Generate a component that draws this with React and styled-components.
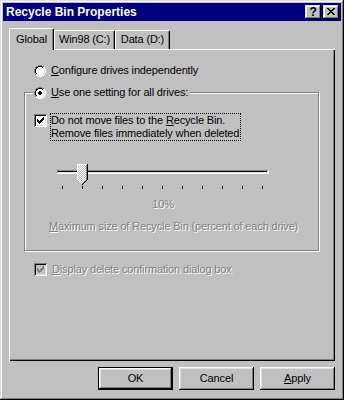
import React from "react";
import styled, { createGlobalStyle } from "styled-components";

const GlobalStyle = createGlobalStyle`
  html, body { margin: 0; padding: 0; background: #c0c0c0; }
  body { font-family: "Liberation Sans", Arial, sans-serif; font-size: 11px; }
  *, *::before, *::after { box-sizing: border-box; }
`;

const Window = styled.div`
  width: 344px;
  height: 400px;
  padding: 3px;
  background: #c0c0c0;
  box-shadow: inset -1px -1px #000, inset 1px 1px #dfdfdf, inset -2px -2px #808080, inset 2px 2px #fff;
  display: flex;
  flex-direction: column;
  font-family: "Liberation Sans", Arial, sans-serif;
  font-size: 11px;
  letter-spacing: -0.15px;
  color: #000;
`;

const TitleBar = styled.div`
  height: 18px;
  flex: none;
  background: #000080;
  display: flex;
  align-items: center;
  justify-content: space-between;
  padding: 0 2px 0 3px;
`;

const Title = styled.span`
  color: #fff;
  font-weight: bold;
  font-size: 12px;
  letter-spacing: 0;
  line-height: 18px;
`;

const CaptionButtons = styled.div`
  display: flex;
  gap: 2px;
`;

const CaptionButton = styled.div`
  width: 16px;
  height: 14px;
  background: #c0c0c0;
  display: flex;
  align-items: center;
  justify-content: center;
  box-shadow: inset -1px -1px #000, inset 1px 1px #dfdfdf, inset -2px -2px #808080, inset 2px 2px #fff;
  font-weight: bold;
  font-size: 12px;
  line-height: 12px;
  padding-bottom: 1px;
`;

const Body = styled.div`
  flex: 1;
  display: flex;
  flex-direction: column;
  padding: 7px 6px 7px 6px;
`;

const TabStrip = styled.div`
  display: flex;
  align-items: flex-end;
  height: 21px;
  flex: none;
`;

const Tab = styled.div`
  width: ${(p) => p.$w}px;
  height: ${(p) => (p.$active ? 22 : 19)}px;
  margin-bottom: ${(p) => (p.$active ? -1 : 0)}px;
  position: relative;
  z-index: ${(p) => (p.$active ? 1 : 0)};
  background: #c0c0c0;
  border-top: 1px solid #fff;
  border-left: 1px solid #fff;
  border-right: 1px solid #000;
  border-radius: 2px 2px 0 0;
  box-shadow: inset -1px 0 #808080;
  padding-top: ${(p) => (p.$active ? 4 : 2)}px;
  text-align: center;
  line-height: 13px;
  white-space: nowrap;
`;

const Panel = styled.div`
  height: 312px;
  flex: none;
  background: #c0c0c0;
  box-shadow: inset 1px 1px #fff, inset -1px -1px #000, inset -2px -2px #808080;
  padding: 15px 15px 0 15px;
  display: flex;
  flex-direction: column;
  align-items: flex-start;
`;

const OptionRow = styled.div`
  display: flex;
  align-items: ${(p) => (p.$top ? "flex-start" : "center")};
  gap: ${(p) => p.$gap ?? 5}px;
  margin-left: ${(p) => p.$indent ?? 10}px;
  margin-top: ${(p) => p.$mt ?? 0}px;
  line-height: 13px;
  white-space: nowrap;
`;

const Group = styled.div`
  width: 295px;
  margin-top: 15px;
  border: 1px solid #808080;
  box-shadow: inset 1px 1px #fff, 1px 1px #fff;
  padding-bottom: 17px;
  display: flex;
  flex-direction: column;
  align-items: flex-start;
`;

const Legend = styled.div`
  margin: -7px 0 0 8px;
  padding: 0 2px 0 1px;
  background: #c0c0c0;
  display: flex;
  align-items: center;
  gap: 5px;
  height: 13px;
  line-height: 13px;
  white-space: nowrap;
`;

const Box = styled.span`
  width: 13px;
  height: 13px;
  flex: none;
  display: flex;
  padding: 3px;
  margin-top: ${(p) => p.$mt ?? 0}px;
  background: ${(p) => (p.$disabled ? "#c0c0c0" : "#fff")};
  box-shadow: inset 1px 1px #808080, inset -1px -1px #fff, inset 2px 2px #000, inset -2px -2px #dfdfdf;
`;

const FocusLabel = styled.span`
  border: 1px dotted #000;
  line-height: 13px;
  padding-right: 1px;
  white-space: nowrap;
`;

const Dim = styled.span`
  color: #808080;
  text-shadow: 1px 1px 0 #fff;
`;

const SliderArt = styled.svg`
  display: block;
  margin: 21px 0 0 31px;
`;

const ValueLabel = styled.div`
  width: 214px;
  margin: 9px 0 0 31px;
  text-align: center;
  line-height: 13px;
`;

const Caption = styled.div`
  margin: 9px 0 0 24px;
  line-height: 13px;
  white-space: nowrap;
`;

const ButtonRow = styled.div`
  display: flex;
  justify-content: flex-end;
  gap: 6px;
  margin-top: 6px;
`;

const PushButton = styled.div`
  width: 75px;
  height: 23px;
  display: flex;
  align-items: center;
  justify-content: center;
  background: #c0c0c0;
  line-height: 13px;
  box-shadow: ${(p) =>
    p.$default
      ? "inset 0 0 0 1px #000, inset -2px -2px #000, inset 2px 2px #fff, inset -3px -3px #808080, inset 3px 3px #dfdfdf"
      : "inset -1px -1px #000, inset 1px 1px #fff, inset -2px -2px #808080, inset 2px 2px #dfdfdf"};
`;

const Bitmap = ({ rows, palette }) => {
  const h = rows.length;
  const w = rows[0].length;
  const rects = [];
  rows.forEach((r, y) => {
    [...r].forEach((c, x) => {
      const fill = palette[c];
      if (fill) rects.push(<rect key={`${x}-${y}`} x={x} y={y} width={1} height={1} fill={fill} />);
    });
  });
  return (
    <svg width={w} height={h} viewBox={`0 0 ${w} ${h}`} shapeRendering="crispEdges" style={{ display: "block", flex: "none" }}>
      {rects}
    </svg>
  );
};

const RADIO = [
  "....gggg....",
  "..ggkkkkgg..",
  ".gkkwwwwklw.",
  ".gkwwwwwwlw.",
  "gkwwwwwwwwlw",
  "gkwwwwwwwwlw",
  "gkwwwwwwwwlw",
  "gkwwwwwwwwlw",
  ".gkwwwwwwlw.",
  ".gllwwwwllw.",
  "..wwllllww..",
  "....wwww....",
];
const DOT = [
  "............",
  "............",
  "............",
  "............",
  ".....oo.....",
  "....oooo....",
  "....oooo....",
  ".....oo.....",
  "............",
  "............",
  "............",
  "............",
];
const radioRows = (checked) =>
  RADIO.map((r, y) => [...r].map((c, x) => (checked && DOT[y][x] === "o" ? "o" : c)).join(""));
const RADIO_PAL = { g: "#808080", k: "#000", w: "#fff", l: "#dfdfdf", o: "#000" };

const Radio = ({ checked }) => <Bitmap rows={radioRows(checked)} palette={RADIO_PAL} />;

const CHECK = ["......x", ".....xx", "x...xxx", "xx.xxx.", "xxxxx..", ".xxx...", "..x...."];

const CheckBox = ({ disabled, mt }) => (
  <Box $disabled={disabled} $mt={mt}>
    <Bitmap rows={CHECK} palette={{ x: disabled ? "#808080" : "#000" }} />
  </Box>
);

const CLOSE = ["xx....xx", ".xx..xx.", "..xxxx..", "...xx...", "..xxxx..", ".xx..xx.", "xx....xx"];

const Slider = () => {
  const tx = 21;
  const ty = 2;
  const thumb = [];
  for (let r = 0; r < 21; r++) {
    let l = 0;
    let rr = 10;
    if (r >= 16) {
      const k = r - 15;
      l = k;
      rr = 10 - k;
    }
    for (let x = l; x <= rr; x++) {
      let fill;
      if (r < 16) {
        if (x === 10) fill = "#000";
        else if (r === 0 || x === 0) fill = "#fff";
        else if (x === 9) fill = "#808080";
        else fill = (x + r) % 2 ? "#fff" : "#c0c0c0";
      } else {
        if (x === rr) fill = "#000";
        else if (x === l) fill = "#fff";
        else if (x === rr - 1) fill = "#808080";
        else fill = (x + r) % 2 ? "#fff" : "#c0c0c0";
      }
      thumb.push(<rect key={`t${x}-${r}`} x={tx + x} y={ty + r} width={1} height={1} fill={fill} />);
    }
  }
  const ticks = [];
  for (let i = 0; i < 11; i++) ticks.push(<rect key={`k${i}`} x={6 + i * 20} y={24} width={1} height={3} fill="#000" />);
  return (
    <SliderArt width={214} height={27} viewBox="0 0 214 27" shapeRendering="crispEdges">
      <rect x={1} y={8} width={212} height={1} fill="#808080" />
      <rect x={1} y={8} width={1} height={4} fill="#808080" />
      <rect x={2} y={9} width={210} height={1} fill="#000" />
      <rect x={2} y={9} width={1} height={2} fill="#000" />
      <rect x={2} y={10} width={210} height={1} fill="#dfdfdf" />
      <rect x={211} y={9} width={1} height={2} fill="#dfdfdf" />
      <rect x={1} y={11} width={212} height={1} fill="#fff" />
      <rect x={212} y={8} width={1} height={4} fill="#fff" />
      {ticks}
      {thumb}
    </SliderArt>
  );
};

export default function App() {
  return (
    <>
      <GlobalStyle />
      <Window>
        <TitleBar>
          <Title>Recycle Bin Properties</Title>
          <CaptionButtons>
            <CaptionButton>?</CaptionButton>
            <CaptionButton>
              <Bitmap rows={CLOSE} palette={{ x: "#000" }} />
            </CaptionButton>
          </CaptionButtons>
        </TitleBar>
        <Body>
          <TabStrip>
            <Tab $active $w={45}>Global</Tab>
            <Tab $w={61}>Win98 (C:)</Tab>
            <Tab $w={55}>Data (D:)</Tab>
          </TabStrip>
          <Panel>
            <OptionRow>
              <Radio />
              <span>
                <u>C</u>onfigure drives independently
              </span>
            </OptionRow>
            <Group>
              <Legend>
                <Radio checked />
                <span>
                  <u>U</u>se one setting for all drives:
                </span>
              </Legend>
              <OptionRow $top $gap={3} $indent={9} $mt={14}>
                <CheckBox mt={1} />
                <FocusLabel>
                  Do not move files to the <u>R</u>ecycle Bin.
                  <br />
                  Remove files immediately when deleted
                </FocusLabel>
              </OptionRow>
              <Slider />
              <ValueLabel>
                <Dim>10%</Dim>
              </ValueLabel>
              <Caption>
                <Dim>
                  <u>M</u>aximum size of Recycle Bin (percent of each drive)
                </Dim>
              </Caption>
            </Group>
            <OptionRow $mt={12}>
              <CheckBox disabled />
              <Dim>
                <u>D</u>isplay delete confirmation dialog box
              </Dim>
            </OptionRow>
          </Panel>
          <ButtonRow>
            <PushButton $default>OK</PushButton>
            <PushButton>Cancel</PushButton>
            <PushButton>
              <span>
                <u>A</u>pply
              </span>
            </PushButton>
          </ButtonRow>
        </Body>
      </Window>
    </>
  );
}
